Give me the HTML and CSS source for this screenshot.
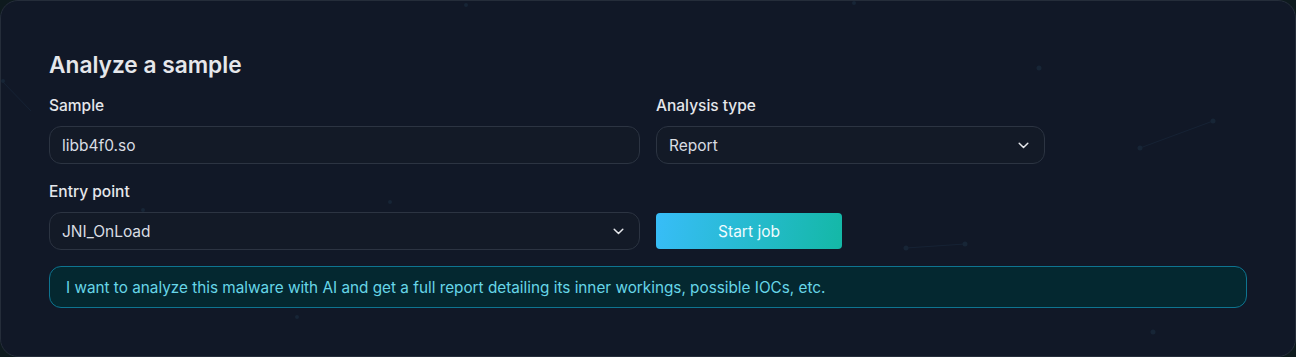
FILE: index.html
```html
<!DOCTYPE html>
<html lang="en">
<head>
    <meta charset="UTF-8">
    <meta name="viewport" content="width=device-width, initial-scale=1.0">
    <title>Analyze a sample</title>
    <link rel="stylesheet" href="styles.css">
</head>
<body>
    <section class="panel">
        <!-- faint particle background -->
        <svg class="particles" width="1296" height="357" viewBox="0 0 1296 357">
            <g stroke="#162234" stroke-width="1">
                <line x1="1139" y1="147" x2="1212" y2="120"/>
                <line x1="905" y1="247" x2="964" y2="243"/>
                <line x1="1" y1="80" x2="30" y2="110"/>
            </g>
            <g fill="#172536">
                <circle cx="1038" cy="67" r="2.5"/>
                <circle cx="1212" cy="120" r="2.5"/>
                <circle cx="1139" cy="147" r="2.5"/>
                <circle cx="905" cy="247" r="2.5"/>
                <circle cx="964" cy="243" r="2.5"/>
                <circle cx="1152" cy="331" r="2.5"/>
                <circle cx="389" cy="201" r="2"/>
                <circle cx="142" cy="209" r="2"/>
                <circle cx="2" cy="80" r="2"/>
                <circle cx="296" cy="316" r="2"/>
                <circle cx="465" cy="4" r="2"/>
                <circle cx="853" cy="2" r="2"/>
            </g>
        </svg>

        <h2 class="title">Analyze a sample</h2>

        <div class="form-grid">
            <div class="field">
                <label>Sample</label>
                <div class="input">libb4f0.so</div>
            </div>
            <div class="field">
                <label>Analysis type</label>
                <div class="input select">
                    <span>Report</span>
                    <svg width="11" height="7" viewBox="0 0 11 7"><path d="M1.2 1.2 5.5 5.5l4.3-4.3" fill="none" stroke="#e5e7eb" stroke-width="1.5" stroke-linecap="round" stroke-linejoin="round"/></svg>
                </div>
            </div>
            <div class="field">
                <label>Entry point</label>
                <div class="input select">
                    <span>JNI_OnLoad</span>
                    <svg width="11" height="7" viewBox="0 0 11 7"><path d="M1.2 1.2 5.5 5.5l4.3-4.3" fill="none" stroke="#e5e7eb" stroke-width="1.5" stroke-linecap="round" stroke-linejoin="round"/></svg>
                </div>
            </div>
            <div class="field action">
                <button class="btn-start">Start job</button>
            </div>
        </div>

        <div class="notice">I want to analyze this malware with AI and get a full report detailing its inner workings, possible IOCs, etc.</div>
    </section>
</body>
</html>
```

FILE: styles.css
```css
body {
    margin: 0;
    padding: 0;
    background-color: #0e1a1e;
    font-family: Inter, "Noto Sans", sans-serif;
    color: #e5e7eb;
}

.panel {
    position: relative;
    box-sizing: border-box;
    width: 1296px;
    height: 357px;
    padding: 48px 48px 0 48px;
    background-color: #111827;
    border: 1px solid #252d3a;
    border-radius: 18px;
    overflow: hidden;
}

.particles {
    position: absolute;
    left: 0;
    top: 0;
    pointer-events: none;
}

.title {
    position: relative;
    margin: 0 0 15px 0;
    font-size: 22.7px;
    font-weight: 600;
    line-height: 32px;
    color: #e5e7eb;
}

.form-grid {
    position: relative;
    display: grid;
    grid-template-columns: 591px 389px;
    column-gap: 16px;
    row-gap: 18px;
}

.field label {
    display: block;
    font-size: 15.5px;
    font-weight: 500;
    line-height: 20px;
    margin-bottom: 10px;
    color: #e5e7eb;
}

.input {
    box-sizing: border-box;
    height: 38px;
    padding: 0 15px 0 12px;
    display: flex;
    align-items: center;
    background-color: #131a27;
    border: 1px solid #2c3442;
    border-radius: 12px;
    font-size: 15.5px;
    color: #d9dde3;
}

.select {
    justify-content: space-between;
}

.action {
    display: flex;
    align-items: flex-end;
    padding-bottom: 1px;
}

.btn-start {
    width: 186px;
    height: 36px;
    border: none;
    border-radius: 4px;
    background: linear-gradient(100deg, #38bdf8, #14b8a6);
    color: #f0fbff;
    font-family: Inter, "Noto Sans", sans-serif;
    font-size: 15.5px;
    cursor: pointer;
}

.notice {
    position: relative;
    box-sizing: border-box;
    width: 1198px;
    height: 42px;
    margin-top: 16px;
    padding: 0 16px;
    display: flex;
    align-items: center;
    background-color: #042830;
    border: 1px solid #0e7490;
    border-radius: 12px;
    font-size: 15.3px;
    color: #67d6e8;
}
```
